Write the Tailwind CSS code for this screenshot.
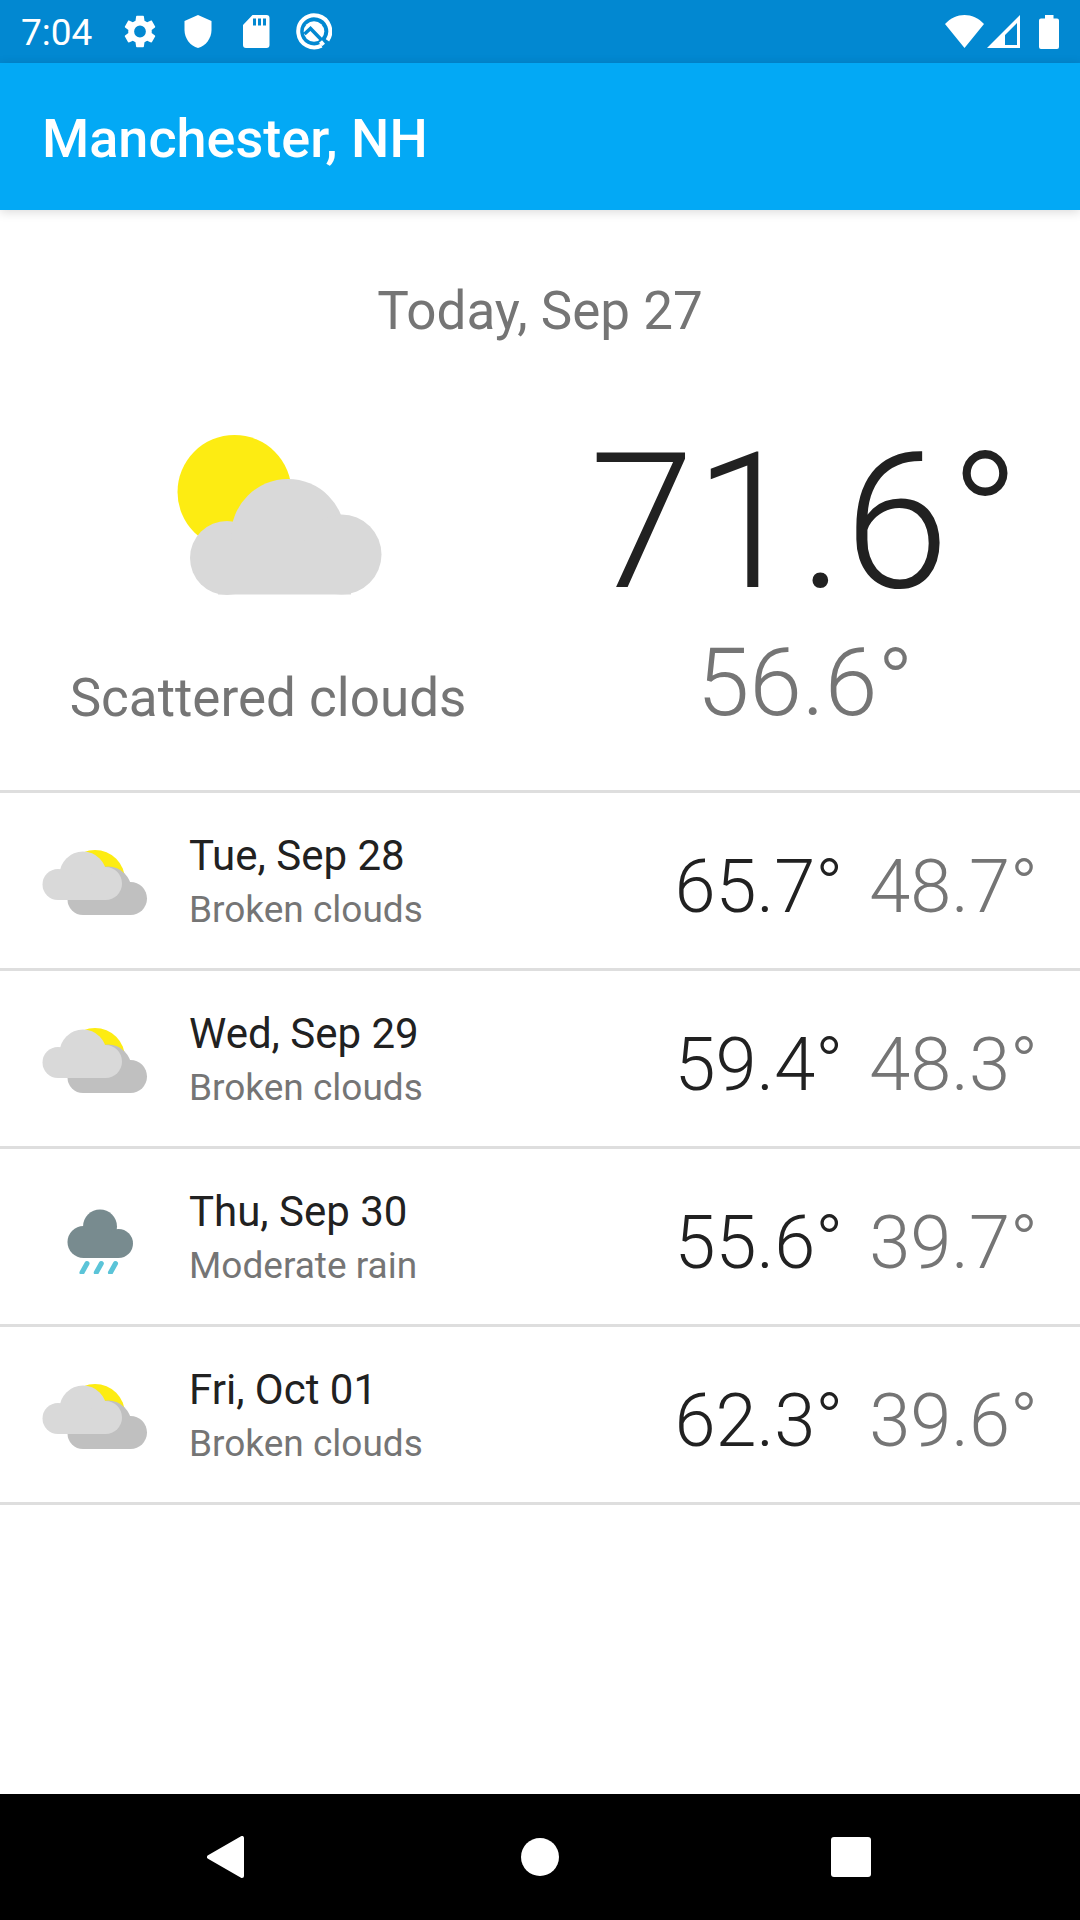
<!DOCTYPE html>
<html lang="en">
<head>
<meta charset="utf-8">
<meta name="viewport" content="width=device-width, initial-scale=1">
<title>Manchester, NH</title>
<script src="https://cdn.jsdelivr.net/npm/@tailwindcss/browser@4"></script>
</head>
<body class="flex min-h-screen flex-col bg-white font-['Roboto',sans-serif] text-[#212121]">

<svg class="hidden" aria-hidden="true">
  <symbol id="broken" viewBox="22 28 106 70">
    <circle cx="75" cy="60" r="30" fill="#fdec12"/>
    <g fill="#c0c0c0">
      <circle cx="63" cy="79.500" r="15.500"/><circle cx="88" cy="70" r="23.500"/><circle cx="110.500" cy="78.500" r="16.500"/><path d="M63 70h47v25H63z"/>
    </g>
    <g fill="#d9d9d9">
      <circle cx="38" cy="64.500" r="15.500"/><circle cx="63" cy="55" r="23.500"/><circle cx="85.500" cy="63.500" r="16.500"/><path d="M38 55h47v25H38z"/>
    </g>
  </symbol>
</svg>

<div class="flex h-[63px] items-center justify-between bg-[#0288d1] px-[21px] text-white">
  <div class="flex items-center">
    <time class="w-[103px] pt-0.5 text-[37px] leading-[44px]">7:04</time>
    <svg class="h-[33px] w-8" viewBox="2.200 2 19.600 20" fill="currentColor" aria-label="Settings"><path d="M19.140 12.940c.04-.3.060-.61.060-.94 0-.32-.02-.64-.07-.94l2.030-1.580c.18-.14.23-.41.120-.61l-1.920-3.320c-.12-.22-.37-.29-.59-.22l-2.390.96c-.5-.38-1.030-.7-1.620-.94L14.400 2.810c-.04-.24-.24-.41-.48-.41h-3.840c-.24 0-.43.17-.47.41L9.250 5.350c-.59.240-1.130.570-1.620.940l-2.390-.96c-.22-.08-.47 0-.59.220L2.740 8.870c-.12.210-.08.470.120.610l2.030 1.580c-.05.300-.09.630-.09.940s.02.640.070.940l-2.030 1.580c-.18.140-.23.410-.12.610l1.920 3.320c.12.220.37.290.59.220l2.390-.96c.5.380 1.030.700 1.620.940l.36 2.540c.05.240.24.410.48.410h3.840c.24 0 .44-.17.470-.41l.36-2.540c.59-.24 1.130-.56 1.620-.94l2.390.960c.22.080.47 0 .59-.22l1.920-3.320c.12-.22.070-.47-.12-.61l-2.010-1.580zM12 15.600A3.600 3.600 0 1 1 12 8.400a3.600 3.600 0 0 1 0 7.200z"/></svg>
    <svg class="ml-7 h-[33px] w-7" viewBox="3 1 18 22" fill="currentColor" aria-label="Protection"><path d="M12 1L3 5v6c0 5.550 3.840 10.740 9 12 5.160-1.260 9-6.450 9-12V5z"/></svg>
    <svg class="ml-[31px] h-[33px] w-[27px]" viewBox="0 0 27 33" fill="currentColor" aria-label="SD card"><path fill-rule="evenodd" d="M9.500 0H23.500Q26.500 0 26.500 3V30Q26.500 33 23.500 33H3Q0 33 0 30V10ZM10 3.500V10.500H13V3.500ZM15 3.500V10.500H18V3.500ZM20 3.500V10.500H23V3.500Z"/></svg>
    <svg class="ml-[26px] h-[37px] w-9" viewBox="0 0 36 37" fill="none" aria-label="System notification"><path d="M31.500 27.300A16 16 0 1 0 25.500 32.600" stroke="#fff" stroke-width="4"/><circle cx="18" cy="18.500" r="10.300" fill="#fff"/><path d="M8.500 21l6-5.500L29 30.500" stroke="#0288d1" stroke-width="3.500"/><path d="M24.500 28.500l3 3.500" stroke="#fff" stroke-width="4"/></svg>
  </div>
  <div class="flex items-center">
    <svg class="h-[33px] w-[39px]" viewBox="0 0 39 33" fill="currentColor" aria-label="Wi-Fi"><path d="M0 9C11-3 28-3 39 9L19.500 33z"/></svg>
    <svg class="ml-[3px] h-[33px] w-[33px]" viewBox="0 0 33 33" fill="currentColor" aria-label="Mobile signal"><path fill-rule="evenodd" d="M33 0V33H0ZM30 8L18 20V30H30Z"/></svg>
    <svg class="ml-[19px] h-[34px] w-5" viewBox="0 0 20 34" fill="currentColor" aria-label="Battery full"><path d="M6 0h8.500v3.500H18q2 0 2 2V32q0 2-2 2H2q-2 0-2-2V5.500q0-2 2-2h4z"/></svg>
  </div>
</div>

<header class="flex h-[147px] items-center bg-[#03a9f5] px-[42px] shadow-[0_2px_10px_rgba(0,0,0,0.15)]">
  <h1 class="pt-1 text-[54px] leading-[62px] font-medium text-white">Manchester, NH</h1>
</header>

<main class="flex-1">
  <section class="border-b-[3px] border-[#dedede] pt-[70px] pb-[51px]">
    <h2 class="text-center text-[53px] leading-[62px] text-[#757575]">Today, Sep 27</h2>
    <div class="grid grid-cols-2 pt-[66px]">
      <div class="flex flex-col items-center justify-between pr-1 pb-[10px]">
        <svg class="mt-[3px] ml-6 h-[200px] w-[240px]" viewBox="0 0 240 200" role="img" aria-label="Sun behind a cloud">
          <circle cx="74.500" cy="81" r="57" fill="#fdec12"/>
          <g fill="#d9d9d9"><circle cx="67" cy="147" r="37"/><circle cx="128" cy="125" r="57"/><circle cx="181.500" cy="143.500" r="40"/><path d="M58 130h133v53.500H58z"/></g>
        </svg>
        <p class="text-[53px] leading-[62px] text-[#757575]">Scattered clouds</p>
      </div>
      <div class="flex flex-col items-center pt-[11px] pr-[10px] font-light">
        <p class="text-[189px] leading-[208px]">71.6°</p>
        <p class="text-[95px] leading-[112px] text-[#757575]">56.6°</p>
      </div>
    </div>
  </section>

  <ul>
    <li class="flex h-[178px] items-center border-b-[3px] border-[#dedede] px-[42px] pt-1">
      <svg class="h-[70px] w-[106px]" role="img" aria-label="Broken clouds"><use href="#broken"/></svg>
      <div class="ml-[41px] flex-1"><h3 class="text-[42px] leading-[54px]">Tue, Sep 28</h3><p class="text-[37px] leading-[54px] text-[#757575]">Broken clouds</p></div>
      <p class="flex gap-[26px] pt-2 text-[74px] leading-[86px] font-light"><span>65.7°</span><span class="text-[#757575]">48.7°</span></p>
    </li>
    <li class="flex h-[178px] items-center border-b-[3px] border-[#dedede] px-[42px] pt-1">
      <svg class="h-[70px] w-[106px]" role="img" aria-label="Broken clouds"><use href="#broken"/></svg>
      <div class="ml-[41px] flex-1"><h3 class="text-[42px] leading-[54px]">Wed, Sep 29</h3><p class="text-[37px] leading-[54px] text-[#757575]">Broken clouds</p></div>
      <p class="flex gap-[26px] pt-2 text-[74px] leading-[86px] font-light"><span>59.4°</span><span class="text-[#757575]">48.3°</span></p>
    </li>
    <li class="flex h-[178px] items-center border-b-[3px] border-[#dedede] px-[42px] pt-1">
      <svg class="h-[70px] w-[106px]" viewBox="2 14 106 70" role="img" aria-label="Rain">
        <g fill="#788b8f"><circle cx="43.500" cy="52" r="16"/><circle cx="60" cy="36.500" r="17"/><circle cx="78.500" cy="53.500" r="14.500"/><path d="M43 42h35v26H43z"/></g>
        <path d="M47 73.500l-5 9M61.300 73.500l-5 9M75.500 73.500l-5 9" stroke="#5bc4d8" stroke-width="5" stroke-linecap="round"/>
      </svg>
      <div class="ml-[41px] flex-1"><h3 class="text-[42px] leading-[54px]">Thu, Sep 30</h3><p class="text-[37px] leading-[54px] text-[#757575]">Moderate rain</p></div>
      <p class="flex gap-[26px] pt-2 text-[74px] leading-[86px] font-light"><span>55.6°</span><span class="text-[#757575]">39.7°</span></p>
    </li>
    <li class="flex h-[178px] items-center border-b-[3px] border-[#dedede] px-[42px] pt-1">
      <svg class="h-[70px] w-[106px]" role="img" aria-label="Broken clouds"><use href="#broken"/></svg>
      <div class="ml-[41px] flex-1"><h3 class="text-[42px] leading-[54px]">Fri, Oct 01</h3><p class="text-[37px] leading-[54px] text-[#757575]">Broken clouds</p></div>
      <p class="flex gap-[26px] pt-2 text-[74px] leading-[86px] font-light"><span>62.3°</span><span class="text-[#757575]">39.6°</span></p>
    </li>
  </ul>
</main>

<nav class="flex h-[126px] items-center justify-center gap-[231px] bg-black" aria-label="System navigation">
  <button type="button" aria-label="Back" class="flex h-full w-20 items-center justify-center pr-2"><svg class="h-[42px] w-[37px]" viewBox="0 0 37 42"><path d="M2 21L35 2v38z" fill="#fff" stroke="#fff" stroke-width="4" stroke-linejoin="round"/></svg></button>
  <button type="button" aria-label="Home" class="flex h-full w-20 items-center justify-center"><svg class="size-[38px]" viewBox="0 0 38 38"><circle cx="19" cy="19" r="19" fill="#fff"/></svg></button>
  <button type="button" aria-label="Overview" class="flex h-full w-20 items-center justify-center"><svg class="size-10" viewBox="0 0 40 40"><rect width="40" height="40" rx="3" fill="#fff"/></svg></button>
</nav>
</body>
</html>
